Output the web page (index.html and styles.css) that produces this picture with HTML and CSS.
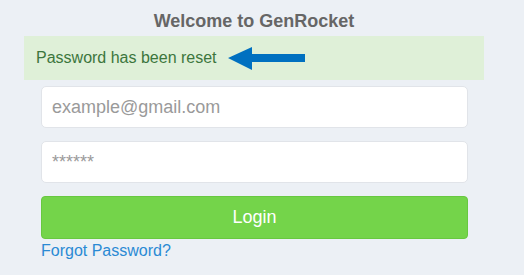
FILE: index.html
```html
<!DOCTYPE html>
<html>
<head>
<meta charset="utf-8">
<link rel="stylesheet" href="styles.css">
</head>
<body>
<div class="wrap">
  <h1 class="title">Welcome to GenRocket</h1>
  <div class="alert">
    <span class="alert-text">Password has been reset</span>
    <svg class="arrow" width="77" height="23" viewBox="0 0 77 23"><polygon points="0,11 24,0 24,7 77,7 77,15 24,15 24,23" fill="#0070c0"/></svg>
  </div>
  <form class="form">
    <input class="field" type="text" placeholder="example@gmail.com">
    <input class="field" type="password" placeholder="******">
    <button class="btn" type="button">Login</button>
    <a class="link" href="#">Forgot Password?</a>
  </form>
</div>
</body>
</html>
```
FILE: styles.css
```css
html, body {
  margin: 0;
  padding: 0;
  background: #ecf0f5;
  font-family: "Liberation Sans", Arial, sans-serif;
}
.wrap {
  width: 460px;
  margin-left: 24px;
  padding-top: 11px;
  display: flex;
  flex-direction: column;
}
.title {
  margin: 0;
  font-size: 18px;
  line-height: 20px;
  font-weight: bold;
  color: #666666;
  text-align: center;
}
.alert {
  margin-top: 5px;
  height: 44px;
  background: #dff0d8;
  box-sizing: border-box;
  display: flex;
  align-items: center;
  padding-left: 12px;
}
.alert-text {
  font-size: 16px;
  color: #3c763d;
}
.arrow {
  margin-left: 11px;
  display: block;
}
.form {
  margin: 6px 16px 0 17px;
  display: flex;
  flex-direction: column;
}
.field {
  height: 42px;
  box-sizing: border-box;
  border: 1px solid #e1e4e9;
  border-radius: 5px;
  background: #fff;
  padding: 0 10px;
  font-family: "Liberation Sans", Arial, sans-serif;
  font-size: 18px;
  color: #555;
  margin-bottom: 13px;
  outline: none;
}
.field::placeholder {
  color: #9a9a9a;
}
.btn {
  height: 43px;
  box-sizing: border-box;
  border: 1px solid #68c840;
  border-radius: 4px;
  background: #74d44a;
  color: #ffffff;
  font-family: "Liberation Sans", Arial, sans-serif;
  font-size: 18px;
  padding: 0;
}
.link {
  margin-top: 2px;
  font-size: 16px;
  line-height: 20px;
  color: #2a8ad4;
  text-decoration: none;
  align-self: flex-start;
}
```
